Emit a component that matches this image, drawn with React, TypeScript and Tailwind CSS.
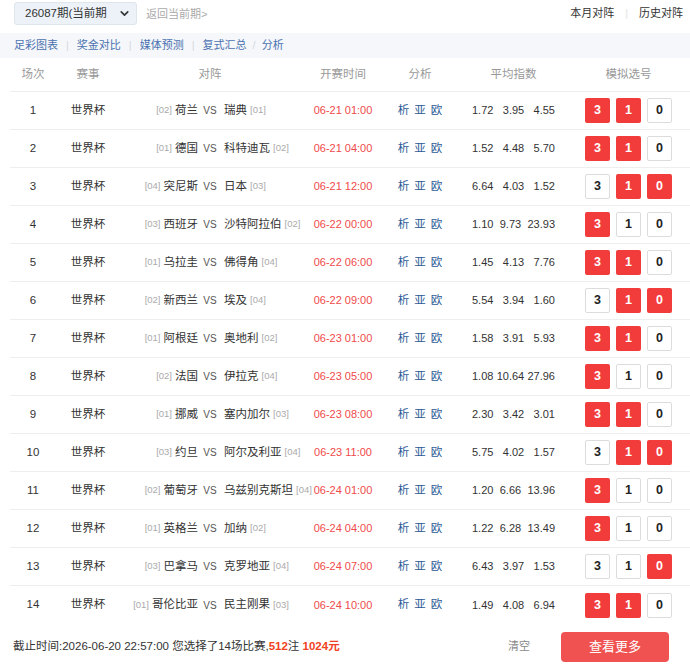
import React from "react";
import { ChevronDown } from "lucide-react";

type Row = {
  n: number;
  hr: string;
  h: string;
  a: string;
  ar: string;
  t: string;
  o: [string, string, string];
  s: number[];
};

const rows: Row[] = [
  { n: 1, hr: "[02]", h: "荷兰", a: "瑞典", ar: "[01]", t: "06-21 01:00", o: ["1.72", "3.95", "4.55"], s: [3, 1] },
  { n: 2, hr: "[01]", h: "德国", a: "科特迪瓦", ar: "[02]", t: "06-21 04:00", o: ["1.52", "4.48", "5.70"], s: [3, 1] },
  { n: 3, hr: "[04]", h: "突尼斯", a: "日本", ar: "[03]", t: "06-21 12:00", o: ["6.64", "4.03", "1.52"], s: [1, 0] },
  { n: 4, hr: "[03]", h: "西班牙", a: "沙特阿拉伯", ar: "[02]", t: "06-22 00:00", o: ["1.10", "9.73", "23.93"], s: [3] },
  { n: 5, hr: "[01]", h: "乌拉圭", a: "佛得角", ar: "[04]", t: "06-22 06:00", o: ["1.45", "4.13", "7.76"], s: [3, 1] },
  { n: 6, hr: "[02]", h: "新西兰", a: "埃及", ar: "[04]", t: "06-22 09:00", o: ["5.54", "3.94", "1.60"], s: [1, 0] },
  { n: 7, hr: "[01]", h: "阿根廷", a: "奥地利", ar: "[02]", t: "06-23 01:00", o: ["1.58", "3.91", "5.93"], s: [3, 1] },
  { n: 8, hr: "[02]", h: "法国", a: "伊拉克", ar: "[04]", t: "06-23 05:00", o: ["1.08", "10.64", "27.96"], s: [3] },
  { n: 9, hr: "[01]", h: "挪威", a: "塞内加尔", ar: "[03]", t: "06-23 08:00", o: ["2.30", "3.42", "3.01"], s: [3, 1] },
  { n: 10, hr: "[03]", h: "约旦", a: "阿尔及利亚", ar: "[04]", t: "06-23 11:00", o: ["5.75", "4.02", "1.57"], s: [1, 0] },
  { n: 11, hr: "[02]", h: "葡萄牙", a: "乌兹别克斯坦", ar: "[04]", t: "06-24 01:00", o: ["1.20", "6.66", "13.96"], s: [3] },
  { n: 12, hr: "[01]", h: "英格兰", a: "加纳", ar: "[02]", t: "06-24 04:00", o: ["1.22", "6.28", "13.49"], s: [3] },
  { n: 13, hr: "[03]", h: "巴拿马", a: "克罗地亚", ar: "[04]", t: "06-24 07:00", o: ["6.43", "3.97", "1.53"], s: [0] },
  { n: 14, hr: "[01]", h: "哥伦比亚", a: "民主刚果", ar: "[03]", t: "06-24 10:00", o: ["1.49", "4.08", "6.94"], s: [3, 1] },
];

function Pick({ v, on }: { v: number; on: boolean }) {
  return on ? (
    <div className="w-[25px] h-[25px] rounded-[2px] bg-[#f23c3c] text-white font-bold text-[12.5px] flex items-center justify-center">
      {v}
    </div>
  ) : (
    <div className="w-[25px] h-[25px] rounded-[2px] bg-white border border-[#dcdcdc] text-[#222] font-bold text-[12.5px] flex items-center justify-center">
      {v}
    </div>
  );
}

export default function App() {
  return (
    <div
      className="w-[690px] h-[669px] bg-white overflow-hidden text-[#333]"
      style={{ fontFamily: '"Liberation Sans", "Noto Sans CJK SC", sans-serif' }}
    >
      {/* top bar */}
      <div className="h-[33px] px-[14px]">
        <div className="flex items-center h-[27px]">
          <div className="w-[123px] h-[23px] shrink-0 rounded-[3px] bg-[#edf2f8] border border-[#dfe5ec] flex items-center justify-between pl-[10px] pr-[5px]">
            <span className="text-[11.5px] text-[#333] whitespace-nowrap">26087期(当前期</span>
            <ChevronDown size={13} strokeWidth={3} className="text-[#333] shrink-0" />
          </div>
          <span className="ml-[9px] text-[11px] text-[#aaa] mt-[2px] whitespace-nowrap">返回当前期&gt;</span>
          <div className="ml-auto flex items-center text-[11px] text-[#333] mr-[-7px] whitespace-nowrap">
            <span>本月对阵</span>
            <span className="mx-[11px] text-[#e3e3e3]">|</span>
            <span>历史对阵</span>
          </div>
        </div>
      </div>

      {/* nav */}
      <div className="h-[25px] bg-[#f5f7fa] flex items-center px-[14px] text-[11px] text-[#4a72b0] whitespace-nowrap">
        <span>足彩图表</span>
        <span className="mx-[8px] text-[#d6d9de]">|</span>
        <span>奖金对比</span>
        <span className="mx-[8px] text-[#d6d9de]">|</span>
        <span>媒体预测</span>
        <span className="mx-[8px] text-[#d6d9de]">|</span>
        <span>复式汇总</span>
        <span className="mx-[6px] text-[#d6d9de]">/</span>
        <span>分析</span>
      </div>

      {/* header */}
      <div className="ml-[10px] h-[34px] border-b border-[#eeeeee] flex items-center text-[11.5px] text-[#999]">
        <div className="w-[46px] text-center">场次</div>
        <div className="w-[64px] text-center">赛事</div>
        <div className="w-[78px]" />
        <div className="w-[24px] text-center whitespace-nowrap flex justify-center">对阵</div>
        <div className="w-[88px]" />
        <div className="w-[66px] text-center whitespace-nowrap flex justify-center">开赛时间</div>
        <div className="w-[88px] text-center">分析</div>
        <div className="w-[8px]" />
        <div className="w-[83px] text-center">平均指数</div>
        <div className="w-[30px]" />
        <div className="w-[87px] text-center">模拟选号</div>
      </div>

      {/* rows */}
      <div className="ml-[10px]">
        {rows.map((r, i) => (
          <div
            key={r.n}
            className={
              "h-[38px] flex items-center text-[11.5px] " +
              (i < rows.length - 1 ? "border-b border-[#eeeeee]" : "")
            }
          >
            <div className="w-[46px] text-center text-[#333] text-[11.5px]">{r.n}</div>
            <div className="w-[64px] text-center text-[#333]">世界杯</div>
            <div className="w-[78px] flex justify-end items-center whitespace-nowrap">
              <span className="text-[9.5px] text-[#aaa] mr-[3px]">{r.hr}</span>
              <span className="text-[#333]">{r.h}</span>
            </div>
            <div className="w-[24px] text-center text-[10px] text-[#555]">VS</div>
            <div className="w-[88px] flex items-center whitespace-nowrap pl-[2px]">
              <span className="text-[#333]">{r.a}</span>
              <span className="text-[9.5px] text-[#aaa] ml-[3px]">{r.ar}</span>
            </div>
            <div className="w-[66px] text-center text-[11px] text-[#ef4a4a] whitespace-nowrap">{r.t}</div>
            <div className="w-[88px] flex justify-center gap-[5px] text-[#2c5a96]">
              <span>析</span>
              <span>亚</span>
              <span>欧</span>
            </div>
            <div className="w-[8px]" />
            <div className="w-[83px] flex justify-between text-[11px] text-[#333]">
              <span>{r.o[0]}</span>
              <span>{r.o[1]}</span>
              <span>{r.o[2]}</span>
            </div>
            <div className="w-[30px]" />
            <div className="flex gap-[6px]">
              {[3, 1, 0].map((v) => (
                <Pick key={v} v={v} on={r.s.includes(v)} />
              ))}
            </div>
          </div>
        ))}
      </div>

      {/* bottom */}
      <div className="h-[45px] flex items-center pl-[13px] pr-[21px]">
        <div className="text-[11.5px] text-[#333] whitespace-nowrap">
          截止时间:2026-06-20 22:57:00 您选择了14场比赛,
          <span className="text-[#f0421e] font-bold">512</span>注{" "}
          <span className="text-[#f0421e] font-bold">1024元</span>
        </div>
        <span className="ml-auto text-[11px] text-[#888]">清空</span>
        <button className="ml-[31px] w-[108px] h-[30px] rounded-[4px] bg-[#f05252] text-white text-[13px]">
          查看更多
        </button>
      </div>
    </div>
  );
}
